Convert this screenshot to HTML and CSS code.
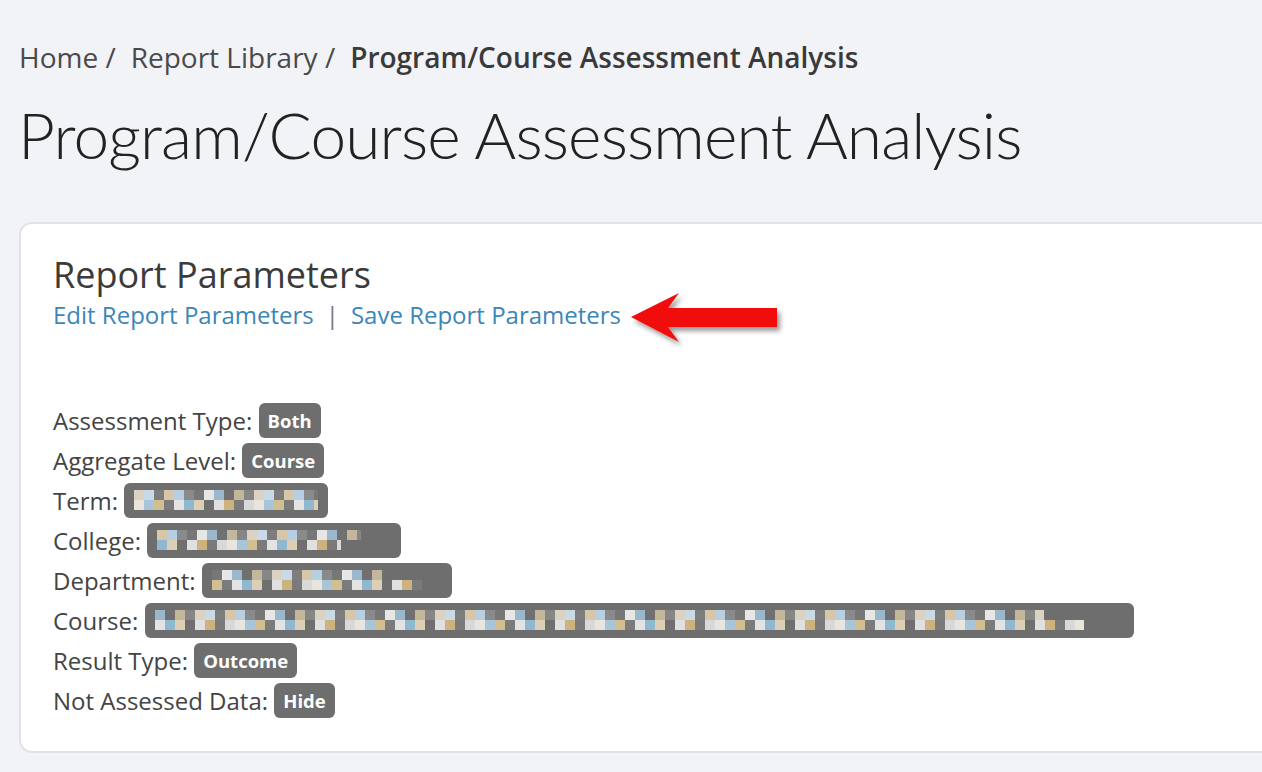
FILE: index.html
```html
<!DOCTYPE html>
<html lang="en">
<head>
<meta charset="utf-8">
<title>Program/Course Assessment Analysis</title>
<link rel="stylesheet" href="styles.css">
</head>
<body>
<div class="page">
  <nav class="crumbs">
    <span class="crumb">Home /</span>
    <span class="crumb">Report Library /</span>
    <span class="crumb current">Program/Course Assessment Analysis</span>
  </nav>
  <h1 class="title">Program/Course Assessment Analysis</h1>
  <section class="card">
    <h2 class="card-title">Report Parameters</h2>
    <div class="links">
      <a class="link" href="#">Edit Report Parameters</a>
      <span class="sep">|</span>
      <a class="link save" href="#">Save Report Parameters</a>
      <svg class="arrow" width="170" height="70" viewBox="0 0 170 70" aria-hidden="true">
        <defs>
          <filter id="sh" x="-20%" y="-30%" width="140%" height="170%">
            <feDropShadow dx="3" dy="4" stdDeviation="2.5" flood-color="#000" flood-opacity="0.4"/>
          </filter>
        </defs>
        <path d="M11 32 L59 8 L48 23 L157 23 L157 42 L48 42 L59 57 Z" fill="#f20d0d" filter="url(#sh)"/>
      </svg>
    </div>
    <ul class="params">
      <li>Assessment Type: <span class="badge">Both</span></li>
      <li>Aggregate Level: <span class="badge">Course</span></li>
      <li>Term: <span class="badge blur w-term"><span class="mosaic"></span></span></li>
      <li>College: <span class="badge blur w-college"><span class="mosaic m2"></span></span></li>
      <li>Department: <span class="badge blur w-dept"><span class="mosaic m3"></span></span></li>
      <li>Course: <span class="badge blur w-course"><span class="mosaic m4"></span></span></li>
      <li>Result Type: <span class="badge">Outcome</span></li>
      <li>Not Assessed Data: <span class="badge">Hide</span></li>
    </ul>
  </section>
</div>
</body>
</html>
```
FILE: styles.css
```css
html, body {
  margin: 0;
  padding: 0;
  background: #f2f3f7;
}
body {
  font-family: "Open Sans", "Liberation Sans", sans-serif;
  color: #444;
}
.page {
  padding: 37px 0 0 19px;
  overflow: hidden;
}
.crumbs {
  display: flex;
  gap: 15px;
  font-size: 28px;
  line-height: 40px;
  color: #4a4a4a;
}
.crumb.current {
  font-weight: 600;
  color: #3a3a3a;
}
.title {
  margin: 18px 0 0 -1px;
  font-family: Lato, "Liberation Sans", sans-serif;
  font-weight: 300;
  font-size: 64px;
  line-height: 80px;
  letter-spacing: -0.85px;
  color: #222;
  white-space: nowrap;
}
.card {
  margin-top: 47px;
  width: 1300px;
  height: 531px;
  background: #fff;
  border: 2px solid #e1e2e5;
  border-right: none;
  border-radius: 13px 0 0 13px;
  padding: 29px 0 0 32px;
  box-sizing: border-box;
}
.card-title {
  margin: 0;
  font-weight: 400;
  font-size: 36px;
  line-height: 44px;
  color: #3b3b3b;
}
.links {
  position: relative;
  display: flex;
  align-items: center;
  margin-top: 2px;
  font-size: 24px;
  line-height: 32px;
}
.link {
  color: #3b86b8;
  text-decoration: none;
}
.sep {
  color: #7a7a7a;
  margin: 0 12px;
}
.arrow {
  position: absolute;
  left: 567px;
  top: -14px;
}
.params {
  list-style: none;
  margin: 69px 0 0 0;
  padding: 0;
  font-size: 24px;
  color: #444;
}
.params li {
  height: 40px;
  display: flex;
  align-items: center;
  white-space: pre;
}
.badge {
  display: inline-flex;
  align-items: center;
  height: 35px;
  padding: 0 9px;
  margin-left: 0;
  box-sizing: border-box;
  border-radius: 6px;
  background: #6e6e6e;
  color: #fff;
  font-weight: 700;
  font-size: 18.5px;
}
.blur {
  padding: 0 10px;
}
.w-term { width: 204px; }
.w-college { width: 254px; }
.w-dept { width: 250px; }
.w-course { width: 989px; }
.mosaic {
  display: block;
  width: 100%;
  height: 20px;
  background:
    repeating-linear-gradient(90deg,
      #dcd2c4 0 10px, #c9d9e6 10px 20px, #7d7d7d 20px 30px, #d8c6a8 30px 40px,
      #b7cfe3 40px 50px, #8a8a8a 50px 60px, #777 60px 70px, #e6e6e6 70px 80px,
      #9ab7cc 80px 90px, #707070 90px 100px, #c2b79a 100px 110px, #868686 110px 120px) 0 0 / 100% 10px no-repeat,
    repeating-linear-gradient(90deg,
      #e9e5dd 0 10px, #a8c4d8 10px 20px, #d2bf90 20px 30px, #7b7b7b 30px 40px,
      #e3e3e3 40px 50px, #8fb7cf 50px 60px, #dccfb6 60px 70px, #6f6f6f 70px 80px,
      #e0e0e0 80px 90px, #cbb27e 90px 100px, #7a7a7a 100px 110px, #d9d9d9 110px 120px) 0 10px / 100% 10px no-repeat;
}
.m2 { background-position: -30px 0, -50px 10px; }
.m3 { background-position: -60px 0, -20px 10px; }
.m4 { background-position: -80px 0, -40px 10px; }
```
